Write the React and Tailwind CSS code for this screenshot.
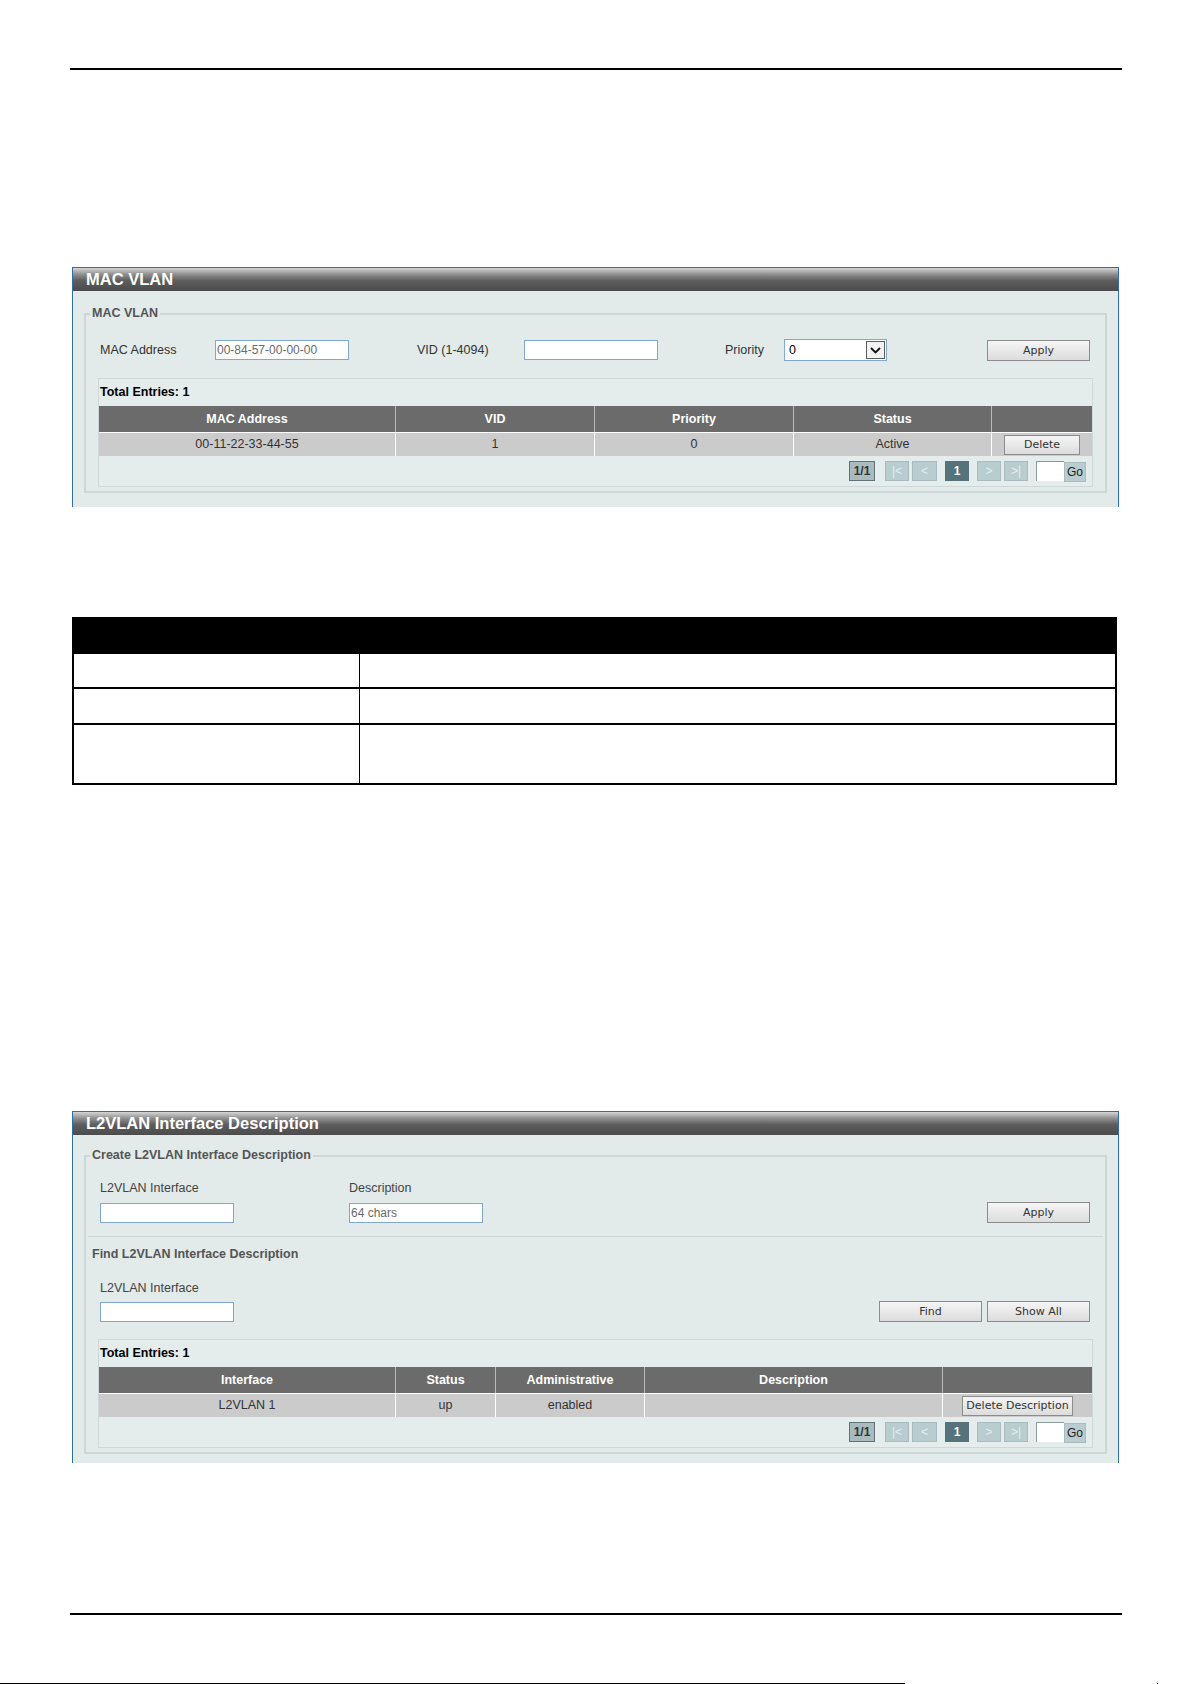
import React from 'react';

const sans = "font-['Liberation_Sans',Arial,sans-serif]";
const btnFont = "font-['DejaVu_Sans',Verdana,sans-serif]";

// dark title strip on top of each panel
function PanelTitle({ children }) {
  return (
    <div className="flex h-[23px] items-center bg-[linear-gradient(to_bottom,#d6d6d6_0%,#8e8e8e_28%,#5d5d5d_55%,#4b4b4b_100%)] pl-[13px] text-[16.5px] font-bold leading-none text-white">
      {children}
    </div>
  );
}

function Panel({ title, className = '', children }) {
  return (
    <div className={`ml-[72px] w-[1047px] border-x border-t border-[#2d6fa6] bg-[#e2eaea] ${className}`}>
      <PanelTitle>{title}</PanelTitle>
      {children}
    </div>
  );
}

// group box with the caption sitting on the top border
function Fieldset({ legend, className = '', children }) {
  return (
    <div className={`mx-[11px] border-2 border-[#ccd7d7] ${className}`}>
      <div className="-mt-[9px] ml-[4px] w-fit bg-[#e2eaea] px-[2px] text-[12.5px] font-bold leading-[14px] text-[#555]">
        {legend}
      </div>
      {children}
    </div>
  );
}

function TextInput({ value = '', className = '' }) {
  return (
    <div className={`flex h-[20px] items-center border border-[#80a8d2] bg-white pl-[1px] text-[12px] text-[#6a6a6a] ${className}`}>
      {value}
    </div>
  );
}

function Button({ children, className = '' }) {
  return (
    <button
      type="button"
      className={`flex items-center justify-center border border-[#8c8c8c] bg-[linear-gradient(to_bottom,#f5f5f5,#dcdcdc)] text-[11px] leading-none text-[#333] ${btnFont} ${className}`}
    >
      {children}
    </button>
  );
}

function PrioritySelect() {
  return (
    <div className="flex h-[22px] w-[103px] items-center justify-between border border-[#80a8d2] bg-white pl-[4px] pr-[1px] text-[12.5px] text-black">
      <span>0</span>
      <span className="flex h-[18px] w-[19px] items-center justify-center border border-[#5c5c5c] bg-[#f2f2f2]">
        <svg width="11" height="7" viewBox="0 0 11 7">
          <polyline points="1,1 5.5,5.5 10,1" fill="none" stroke="#111" strokeWidth="1.8" />
        </svg>
      </span>
    </div>
  );
}

function PageBtn({ children, className = '' }) {
  return (
    <div className={`flex h-[20px] items-center justify-center text-[12px] leading-none ${className}`}>
      {children}
    </div>
  );
}

function Pager() {
  return (
    <div className="flex h-[30px] items-center justify-end pr-[6px]">
      <PageBtn className="w-[26px] border border-[#5f7377] bg-[#a9bbbf] font-bold text-[#333]">1/1</PageBtn>
      <PageBtn className="ml-[10px] w-[24px] border border-[#a8bcc0] bg-[#b9cdd1] text-[#e6eeee]">|&lt;</PageBtn>
      <PageBtn className="ml-[3px] w-[25px] border border-[#a8bcc0] bg-[#b9cdd1] text-[#e6eeee]">&lt;</PageBtn>
      <PageBtn className="ml-[8px] w-[24px] bg-[#56727a] font-bold text-white">1</PageBtn>
      <PageBtn className="ml-[8px] w-[24px] border border-[#a8bcc0] bg-[#b9cdd1] text-[#e6eeee]">&gt;</PageBtn>
      <PageBtn className="ml-[3px] w-[24px] border border-[#a8bcc0] bg-[#b9cdd1] text-[#e6eeee]">&gt;|</PageBtn>
      <div className="ml-[8px] h-[20px] w-[28px] border-l border-t border-[#8f9a9a] bg-white" />
      <PageBtn className="mt-[1px] h-[19px] w-[22px] border border-[#a8bcc0] bg-[#b9cdd1] text-[#222]">Go</PageBtn>
    </div>
  );
}

function EntriesBox({ cols, headers, cells, action }) {
  return (
    <div className="mx-[12px] border border-[#cdd8d8] bg-[#e4ecec]">
      <div className="flex h-[27px] items-center pl-[1px] text-[12.5px] font-bold text-black">Total Entries: 1</div>
      <div className={`grid h-[26px] ${cols} bg-[#6b6b6b] text-[12.5px] font-bold text-white`}>
        {headers.map((h, i) => (
          <div key={i} className="flex items-center justify-center border-r border-[#b8b8b8] last:border-r-0">
            {h}
          </div>
        ))}
      </div>
      <div className={`grid h-[24px] ${cols} border-t border-white bg-[#cbcbcb] text-[12.5px] text-[#333]`}>
        {cells.map((c, i) => (
          <div key={i} className="flex items-center justify-center border-r border-white">
            {c}
          </div>
        ))}
        <div className="flex items-center justify-center">{action}</div>
      </div>
      <Pager />
    </div>
  );
}

function MacVlanPanel() {
  return (
    <Panel title="MAC VLAN" className="mt-[197px] pb-[14px]">
      <Fieldset legend="MAC VLAN" className="mt-[22px] pb-[4px]">
        <div className="mt-[19px] flex h-[22px] items-center pl-[14px] pr-[15px] text-[12.5px] text-[#333]">
          <span className="w-[115px]">MAC Address</span>
          <TextInput value="00-84-57-00-00-00" className="w-[134px]" />
          <span className="ml-[68px] w-[107px]">VID (1-4094)</span>
          <TextInput className="w-[134px]" />
          <span className="ml-[67px] w-[59px]">Priority</span>
          <PrioritySelect />
          <Button className="ml-auto h-[21px] w-[103px]">Apply</Button>
        </div>
        <div className="mt-[17px]">
          <EntriesBox
            cols="grid-cols-[297px_199px_199px_198px_1fr]"
            headers={['MAC Address', 'VID', 'Priority', 'Status', '']}
            cells={['00-11-22-33-44-55', '1', '0', 'Active']}
            action={<Button className="h-[20px] w-[76px]">Delete</Button>}
          />
        </div>
      </Fieldset>
    </Panel>
  );
}

// blank parameter table with a black heading row
function ParamTable() {
  const rows = ['h-[35px]', 'h-[36px]', 'h-[60px]'];
  return (
    <div className="ml-[72px] mt-[110px] w-[1045px] border-x-2 border-black">
      <div className="h-[37px] bg-black" />
      {rows.map((h, i) => (
        <div key={i} className={`flex ${h} border-b-2 border-black`}>
          <div className="w-[286px] border-r border-black" />
          <div className="flex-1" />
        </div>
      ))}
    </div>
  );
}

function L2vlanPanel() {
  return (
    <Panel title="L2VLAN Interface Description" className="mt-[326px] pb-[9px]">
      <Fieldset legend="Create L2VLAN Interface Description" className="mt-[20px] pb-[4px]">
        <div className="mt-[19px] flex items-end pl-[14px] pr-[15px] text-[12.5px] text-[#444]">
          <div className="w-[249px]">
            <div className="leading-[14px]">L2VLAN Interface</div>
            <TextInput className="mt-[8px] w-[134px]" />
          </div>
          <div>
            <div className="leading-[14px]">Description</div>
            <TextInput value="64 chars" className="mt-[8px] w-[134px]" />
          </div>
          <Button className="ml-auto h-[21px] w-[103px]">Apply</Button>
        </div>
        <div className="mx-[2px] mt-[13px] h-px bg-[#cbd6d6]" />
        <div className="mt-[10px] pl-[6px] text-[12.5px] font-bold leading-[14px] text-[#555]">
          Find L2VLAN Interface Description
        </div>
        <div className="mt-[20px] flex items-end pl-[14px] pr-[15px] text-[12.5px] text-[#444]">
          <div>
            <div className="leading-[14px]">L2VLAN Interface</div>
            <TextInput className="mt-[7px] w-[134px]" />
          </div>
          <Button className="ml-auto h-[21px] w-[103px]">Find</Button>
          <Button className="ml-[5px] h-[21px] w-[103px]">Show All</Button>
        </div>
        <div className="mt-[17px]">
          <EntriesBox
            cols="grid-cols-[297px_100px_149px_298px_1fr]"
            headers={['Interface', 'Status', 'Administrative', 'Description', '']}
            cells={['L2VLAN 1', 'up', 'enabled', '']}
            action={<Button className="h-[20px] w-[111px]">Delete Description</Button>}
          />
        </div>
      </Fieldset>
    </Panel>
  );
}

export default function App() {
  return (
    <div className={`flex h-[1684px] w-[1192px] flex-col overflow-hidden bg-white ${sans}`}>
      <div className="ml-[70px] mt-[68px] h-[2px] w-[1052px] bg-black" />
      <MacVlanPanel />
      <ParamTable />
      <L2vlanPanel />
      <div className="ml-[70px] mt-[150px] h-[2px] w-[1052px] bg-black" />
      <div className="mt-[68px] flex h-px">
        <div className="w-[905px] bg-black" />
        <div className="ml-[252px] w-px bg-black" />
      </div>
    </div>
  );
}
